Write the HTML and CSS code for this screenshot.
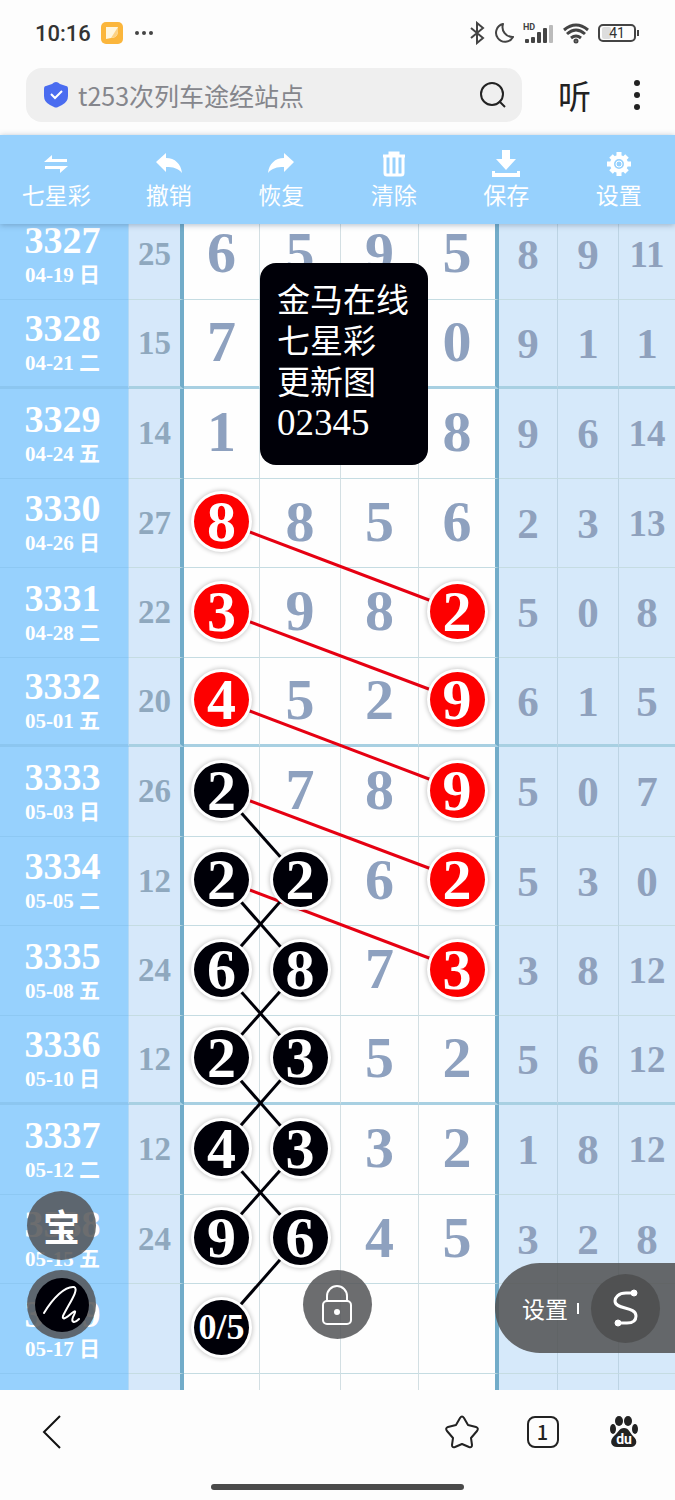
FILE: index.html
```html
<!DOCTYPE html>
<html lang="zh-CN">
  <head>
    <meta charset="UTF-8" />
    <meta name="viewport" content="width=device-width, initial-scale=1" />
    <title>七星彩</title>
    <link rel="stylesheet" href="styles.css">
  </head>
  <body>
    <header>
      <div class="status">
        <span class="time">10:16</span>
        <svg class="app" width="22" height="22" viewBox="0 0 22 22">
          <rect width="22" height="22" rx="5" fill="#fbb63c" />
          <path d="M5 5h12v5q-1 6-7 6l-5 1z" fill="#fff6de" />
          <path d="M17 5v5q-1 6-7 6z" fill="#fdd283" />
        </svg>
        <svg width="20" height="6" viewBox="0 0 20 6" fill="#444">
          <circle cx="3" cy="3" r="2" /><circle cx="10" cy="3" r="2" /><circle cx="17" cy="3" r="2" />
        </svg>
        <div class="status-right">
          <svg width="16" height="24" viewBox="0 0 16 24" fill="none" stroke="#444" stroke-width="2">
            <path d="M2 7l12 10-6 5V2l6 5L2 17" />
          </svg>
          <svg width="22" height="24" viewBox="0 0 22 24" fill="none" stroke="#444" stroke-width="2" stroke-linejoin="round">
            <path d="M10 3a9 9 0 1 0 10 13A10 10 0 0 1 10 3z" />
          </svg>
          <svg width="31" height="24" viewBox="0 0 31 24" fill="#444">
            <text x="0" y="9" class="hd">HD</text>
            <rect x="2" y="18" width="4" height="4" rx="1" />
            <rect x="8" y="16" width="4" height="6" rx="1" />
            <rect x="14" y="11" width="4" height="11" rx="1" />
            <rect x="20" y="7" width="4" height="15" rx="1" />
            <rect x="26" y="4" width="4" height="18" rx="1" fill="#bbb" />
          </svg>
          <svg width="28" height="24" viewBox="0 0 28 24" fill="none" stroke="#444" stroke-width="3">
            <path d="M2 9q12-10 24 0M5 13q9-8 18 0M9 17q5-4 10 0" />
            <circle cx="14" cy="20" r="1" />
          </svg>
          <svg width="42" height="24" viewBox="0 0 42 24">
            <rect x="1" y="4" width="36" height="16" rx="4" fill="none" stroke="#444" stroke-width="2" />
            <rect x="4" y="6" width="9" height="12" rx="2" fill="#ddd" />
            <path d="M40 9v6" stroke="#444" stroke-width="2" />
            <text x="19" y="17" text-anchor="middle" class="level">41</text>
          </svg>
        </div>
      </div>

      <div class="search-row">
        <label class="search">
          <svg width="24" height="26" viewBox="0 0 24 26">
            <path d="M12 0q2 0 4 2l6 2q2 0 2 3v7q0 6-6 9l-4 2q-2 1-4 0l-4-2q-6-3-6-9V7q0-3 2-3l6-2q2-2 4-2z" fill="#4a6cf0" />
            <path d="M7 12l4 4 7-7" fill="none" stroke="#fff" stroke-width="2" />
          </svg>
          <input type="text" value="t253次列车途经站点" aria-label="搜索" />
          <svg width="28" height="28" viewBox="0 0 28 28" fill="none" stroke="#222" stroke-width="2">
            <circle cx="13" cy="13" r="11" /><path d="M20 20l6 6" />
          </svg>
        </label>
        <button class="listen">听</button>
        <button class="more" aria-label="更多">
          <svg width="6" height="30" viewBox="0 0 6 30" fill="#222">
            <circle cx="3" cy="3" r="3" /><circle cx="3" cy="15" r="3" /><circle cx="3" cy="27" r="3" />
          </svg>
        </button>
      </div>
    </header>

    <nav class="toolbar">
      <button>
        <svg width="24" height="28" viewBox="0 0 24 28" fill="#fff">
          <path d="M0 12l8-7v4h15v3zM24 16l-8 7v-4H1v-3z" />
        </svg>
        七星彩
      </button>
      <button>
        <svg width="28" height="28" viewBox="0 0 28 28" fill="#fff">
          <path d="M1 12L11 3v5c9 0 15 6 16 15-4-5-9-6-16-6v5z" />
        </svg>
        撤销
      </button>
      <button>
        <svg width="28" height="28" viewBox="0 0 28 28" fill="#fff">
          <path d="M27 12L17 3v5C8 8 2 14 1 23c4-5 9-6 16-6v5z" />
        </svg>
        恢复
      </button>
      <button>
        <svg width="24" height="28" viewBox="0 0 24 28" fill="none" stroke="#fff">
          <path d="M1 6h22M8 6V3h8v3" stroke-width="3" />
          <path d="M3 7v16q0 2 2 2h14q2 0 2-2V7M9 7v17M15 7v17" stroke-width="3" />
        </svg>
        清除
      </button>
      <button>
        <svg width="28" height="28" viewBox="0 0 28 28" fill="#fff">
          <path d="M10 0h8v9h6L14 20 4 9h6zM0 21h3v2h22v-2h3v6H0z" />
        </svg>
        保存
      </button>
      <button>
        <svg width="26" height="28" viewBox="0 0 26 28" fill="none" stroke="#fff">
          <circle cx="13" cy="14" r="7" stroke-width="4" />
          <path d="M13 2v4M13 22v4M1 14h4M21 14h4M5 6l3 3M18 19l3 3M21 6l-3 3M8 19l-3 3" stroke-width="5" />
          <circle cx="13" cy="14" r="3" stroke-width="1" />
        </svg>
        设置
      </button>
    </nav>

    <main class="board">
      <div class="chart">
        <table>
          <colgroup>
            <col class="c-date"><col class="c-sum">
            <col class="c-n1"><col class="c-n2"><col class="c-n3"><col class="c-n4">
            <col class="c-e1"><col class="c-e2"><col class="c-e3">
          </colgroup>
          <tbody id="rows"></tbody>
        </table>
        <svg class="links" id="links" viewBox="0 0 675 1164" preserveAspectRatio="none"></svg>
      </div>

      <div class="note">金马在线<br />七星彩<br />更新图<br /><span>02345</span></div>

      <button class="float bao">宝</button>
      <button class="float pen" aria-label="画笔">
        <svg width="54" height="54" viewBox="0 0 54 54">
          <circle cx="27" cy="27" r="27" fill="#000008" />
          <path d="M9 35C18 20 30 8 39 9c6 2-6 18-11 29-1 4 2 3 9-3 5-4 3 0 1 4-2 5 1 7 6 2" fill="none" stroke="#fff" stroke-width="2" stroke-linecap="round" />
        </svg>
      </button>
      <button class="float lock" aria-label="锁定">
        <svg width="32" height="42" viewBox="0 0 32 42" fill="none" stroke="#fff" stroke-width="2">
          <rect x="2" y="17" width="28" height="23" rx="4" />
          <path d="M6 17v-5a10 10 0 0 1 20 0v5" />
          <circle cx="16" cy="28" r="3" fill="#fff" stroke="none" />
        </svg>
      </button>
      <div class="drawer">
        <button class="drawer-set">设置</button>
        <i></i>
        <button class="drawer-line" aria-label="连线">
          <svg width="26" height="40" viewBox="0 0 26 40" fill="none" stroke="#fff" stroke-width="3">
            <path d="M21 5H13C5 5 2 10 2 13c0 9 21 5 21 15 0 6-5 7-9 7H5" />
            <circle cx="21" cy="5" r="3" fill="#fff" stroke-width="1" />
            <circle cx="5" cy="35" r="3" fill="#fff" stroke-width="1" />
          </svg>
        </button>
      </div>
    </main>

    <footer>
      <nav class="tabs">
        <button class="back" aria-label="返回">
          <svg width="20" height="34" viewBox="0 0 20 34" fill="none" stroke="#111" stroke-width="2">
            <path d="M18 1L2 17l16 16" />
          </svg>
        </button>
        <button aria-label="收藏">
          <svg width="34" height="34" viewBox="0 0 34 34" fill="none" stroke="#222" stroke-width="2" stroke-linejoin="round">
            <path d="M15 3q2-3 4 0l4 7 8 2q3 1 1 4l-6 7 1 7q0 3-3 2l-7-3-7 3q-3 1-3-2l1-7-6-7q-2-3 1-4l8-2z" />
          </svg>
        </button>
        <button class="count"><span>1</span></button>
        <button aria-label="百度">
          <svg width="30" height="32" viewBox="0 0 30 32" fill="#222">
            <ellipse cx="10" cy="5" rx="4" ry="5" /><ellipse cx="19" cy="5" rx="4" ry="5" />
            <ellipse cx="4" cy="13" rx="3" ry="5" /><ellipse cx="26" cy="13" rx="3" ry="5" />
            <path d="M15 12c5 0 6 5 9 8 6 5 3 11-2 11H8c-6 0-8-6-3-11 4-3 5-8 10-8z" />
            <text x="15" y="28" text-anchor="middle" class="du">du</text>
          </svg>
        </button>
      </nav>
      <div class="home-bar"></div>
    </footer>

    <script>
      // r = red ball, b = black ball
      const rows = [
        ["3327", "04-19 日", "25", "6", "5", "9", "5", "8", "9", "11"],
        ["3328", "04-21 二", "15", "7", "", "", "0", "9", "1", "1"],
        ["3329", "04-24 五", "14", "1", "", "", "8", "9", "6", "14"],
        ["3330", "04-26 日", "27", "r8", "8", "5", "6", "2", "3", "13"],
        ["3331", "04-28 二", "22", "r3", "9", "8", "r2", "5", "0", "8"],
        ["3332", "05-01 五", "20", "r4", "5", "2", "r9", "6", "1", "5"],
        ["3333", "05-03 日", "26", "b2", "7", "8", "r9", "5", "0", "7"],
        ["3334", "05-05 二", "12", "b2", "b2", "6", "r2", "5", "3", "0"],
        ["3335", "05-08 五", "24", "b6", "b8", "7", "r3", "3", "8", "12"],
        ["3336", "05-10 日", "12", "b2", "b3", "5", "2", "5", "6", "12"],
        ["3337", "05-12 二", "12", "b4", "b3", "3", "2", "1", "8", "12"],
        ["3338", "05-15 五", "24", "b9", "b6", "4", "5", "3", "2", "8"],
        ["3339", "05-17 日", "", "b0/5", "", "", "", "", "", ""],
        ["", "", "", "", "", "", "", "", "", ""],
      ]

      function cell(value, type) {
        const ball = /^[rb]/.test(value)
        const text = ball ? value.slice(1) : value
        const small = text.length > 1 ? " small" : ""
        const inner = ball
          ? `<span class="ball ${value[0] === "r" ? "red" : "black"}">${text}</span>`
          : text
        return `<td class="${type}${small}">${inner}</td>`
      }

      document.getElementById("rows").innerHTML = rows
        .map(
          ([issue, date, sum, ...n]) => `<tr>
            <th><b>${issue}</b><small>${date}</small></th>
            <td class="sum">${sum}</td>
            ${n.slice(0, 4).map((v) => cell(v, "num")).join("")}
            ${n.slice(4).map((v) => cell(v, "extra")).join("")}
          </tr>`
        )
        .join("")

      // [from column, from row, to column, to row, colour]
      const colX = [221, 300, 380, 458]
      const rowY = (r) => Math.floor(r * 89.5) + 43
      const links = []
      for (let r = 3; r < 8; r++) links.push([0, r, 3, r + 1, "#e60012"])
      for (let r = 6; r < 11; r++) links.push([0, r, 1, r + 1, "#000008"])
      for (let r = 7; r < 12; r++) links.push([1, r, 0, r + 1, "#000008"])

      document.getElementById("links").innerHTML = links
        .map(
          ([c1, r1, c2, r2, color]) =>
            `<line x1="${colX[c1]}" y1="${rowY(r1)}" x2="${colX[c2]}" y2="${rowY(r2)}" stroke="${color}" />`
        )
        .join("")
    </script>
  </body>
</html>
```
FILE: styles.css
```css
* {
  box-sizing: border-box;
}

body {
  margin: 0;
  height: 100vh;
  display: flex;
  flex-direction: column;
  overflow: hidden;
  background: #fdfdfd;
  font-family: "Noto Sans CJK SC", sans-serif;
  color: #222;
}

svg {
  display: block;
  flex: none;
}

button {
  padding: 0;
  border: none;
  background: none;
  color: inherit;
  font-family: inherit;
  cursor: pointer;
}

/* status bar */
.status {
  display: flex;
  align-items: center;
  height: 66px;
  padding: 0 35px;
}

.time {
  font-family: Roboto, sans-serif;
  font-size: 22px;
  font-weight: 500;
  color: #333;
}

.app {
  margin: 0 11px 0 10px;
}

.status-right {
  display: flex;
  align-items: center;
  gap: 8px;
  margin-left: auto;
}

.hd {
  font: bold 9px Roboto, sans-serif;
}

.level {
  font: 14px Roboto, sans-serif;
  fill: #333;
}

/* address bar */
.search-row {
  display: flex;
  align-items: center;
  padding: 2px 35px 13px 26px;
}

.search {
  flex: 1;
  min-width: 0;
  display: flex;
  align-items: center;
  height: 54px;
  padding: 0 15px 0 18px;
  border-radius: 16px;
  background: #efefef;
}

.search input {
  flex: 1;
  min-width: 0;
  padding: 0 10px;
  border: none;
  outline: none;
  background: none;
  font-family: inherit;
  font-size: 25px;
  color: #85868c;
}

.listen {
  margin: 0 43px 0 36px;
  font-size: 33px;
  line-height: 48px;
}

/* toolbar */
.toolbar {
  position: relative;
  z-index: 3;
  display: grid;
  grid-template-columns: repeat(6, 1fr);
  height: 89px;
  background: #97d1fd;
  box-shadow: 0 1px 6px rgba(60, 90, 120, 0.4);
}

.toolbar button {
  display: flex;
  flex-direction: column;
  align-items: center;
  padding-top: 15px;
  font-size: 23px;
  line-height: 32px;
  color: #fff;
}

/* chart */
.board {
  position: relative;
  flex: 1;
  min-height: 0;
  overflow: hidden;
  background: #fefefe;
}

.chart {
  position: relative;
  margin-top: -14px;
}

table {
  width: 100%;
  table-layout: fixed;
  border-collapse: separate;
  border-spacing: 0;
  font-family: "Liberation Serif", "Noto Sans CJK SC", serif;
  font-weight: bold;
}

.c-date { width: 129px; }
.c-sum { width: 55px; }
.c-n1 { width: 76px; }
.c-n2 { width: 81px; }
.c-n3 { width: 78px; }
.c-n4 { width: 80px; }
.c-e1 { width: 59px; }
.c-e2 { width: 61px; }
.c-e3 { width: 56px; }

tr {
  height: 90px;
}

tr:nth-child(even) {
  height: 89px;
}

th,
td {
  padding: 0;
  text-align: center;
  vertical-align: middle;
  border-bottom: 1px solid #c5dce2;
}

tr:nth-child(4n + 2) > * {
  border-bottom: 3px solid #a8d0e2;
}

th {
  padding-right: 3px;
  background: #97d1fd;
  border-right: 1px solid #b4d9f5;
  border-bottom-color: #8dc8f3;
  color: #fff;
}

tr:nth-child(4n + 2) > th {
  border-bottom-color: #8cc6f0;
}

th b,
th small {
  display: block;
}

th b {
  font-size: 38px;
  line-height: 40px;
}

th small {
  font-size: 21px;
  line-height: 30px;
}

.sum {
  background: #d6e8fa;
  border-right: 4px solid #72acc9;
  font-size: 33px;
  color: #8fa8be;
}

.num {
  padding-bottom: 3px;
  border-right: 1px solid #d3dfe3;
  font-size: 58px;
  line-height: 60px;
  color: #8ea1bf;
}

.num:nth-child(6) {
  border-right: 4px solid #72acc9;
}

.extra {
  border-right: 1px solid #bdd4e4;
  background: #d6e9fa;
  font-size: 43px;
  color: #8fa1bd;
}

.extra:last-child {
  border-right: none;
}

.extra.small {
  font-size: 37px;
}

.ball {
  position: relative;
  z-index: 1;
  display: block;
  width: 55px;
  height: 55px;
  margin: 0 auto;
  border-radius: 50%;
  line-height: 55px;
  color: #fff;
  box-shadow: 0 0 0 3px #fff, 0 0 4px 4px rgba(0, 0, 0, 0.2);
}

.small .ball {
  font-size: 36px;
}

.red {
  background: #fd0000;
}

.black {
  background: #000008;
}

.links {
  position: absolute;
  top: 0;
  left: 0;
  width: 100%;
  height: 1164px;
}

.links line {
  stroke-width: 3px;
  vector-effect: non-scaling-stroke;
}

/* things floating over the chart */
.note {
  position: absolute;
  z-index: 2;
  top: 39px;
  left: 260px;
  width: 168px;
  height: 202px;
  padding: 15px 0 0 17px;
  border-radius: 16px;
  background: #000008;
  color: #fff;
  font-size: 33px;
  line-height: 41px;
  white-space: nowrap;
}

.note span {
  font-family: "Liberation Serif", serif;
  font-size: 37px;
}

.float {
  position: absolute;
  z-index: 2;
  bottom: 51px;
  display: flex;
  align-items: center;
  justify-content: center;
  width: 69px;
  height: 69px;
  border-radius: 50%;
  background: rgba(82, 84, 86, 0.85);
  color: #fff;
}

.bao {
  left: 27px;
  bottom: 130px;
  font-size: 37px;
  line-height: 50px;
  font-weight: bold;
}

.pen {
  left: 27px;
}

.lock {
  left: 50%;
  margin-left: -35px;
}

.drawer {
  position: absolute;
  z-index: 2;
  right: 0;
  bottom: 37px;
  display: flex;
  align-items: center;
  width: 180px;
  height: 90px;
  padding-left: 27px;
  border-radius: 45px 0 0 45px;
  background: rgba(80, 80, 80, 0.85);
  color: #fff;
}

.drawer-set {
  font-size: 23px;
}

.drawer i {
  width: 2px;
  height: 11px;
  margin: 0 12px 0 9px;
  background: #fff;
}

.drawer-line {
  display: flex;
  align-items: center;
  justify-content: center;
  width: 69px;
  height: 69px;
  border-radius: 50%;
  background: #505152;
}

/* browser footer */
footer {
  height: 110px;
}

.tabs {
  display: flex;
  padding: 0 11px;
}

.tabs button {
  display: flex;
  align-items: center;
  justify-content: center;
  width: 81px;
  height: 84px;
}

.tabs .back {
  margin-right: auto;
}

.count span {
  width: 32px;
  height: 32px;
  border: 2px solid #222;
  border-radius: 8px;
  font: 500 20px/27px "Noto Sans CJK SC", sans-serif;
}

.du {
  font: bold 14px Roboto, sans-serif;
  fill: #fff;
}

.home-bar {
  width: 253px;
  height: 6px;
  margin: 10px auto 0;
  border-radius: 3px;
  background: #4a4a4a;
}
```
